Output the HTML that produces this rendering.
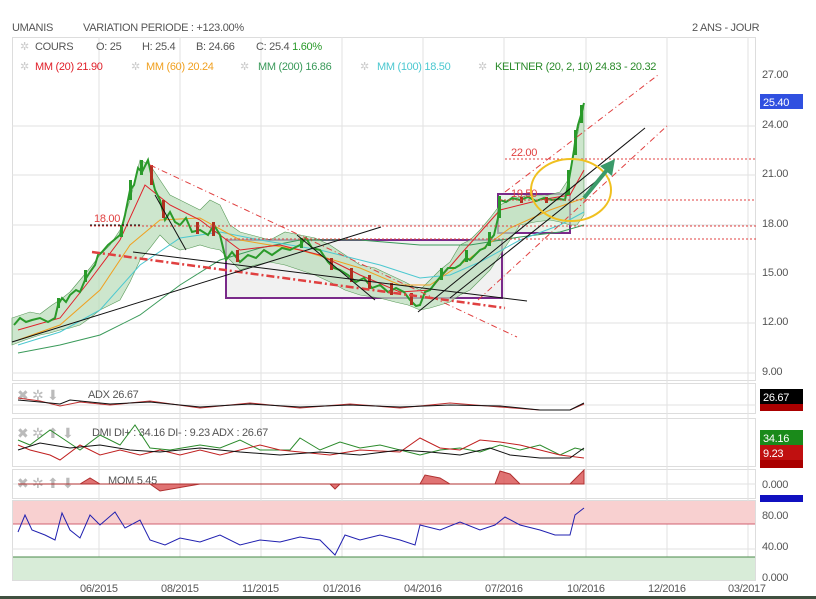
<!DOCTYPE html>
<html><head><meta charset="utf-8"><style>
body{margin:0;background:#fff;font-family:"Liberation Sans",sans-serif;}
svg{display:block}
text{font-family:"Liberation Sans",sans-serif;letter-spacing:-0.3px}
</style></head><body>
<svg width="816" height="599" viewBox="0 0 816 599" xmlns="http://www.w3.org/2000/svg">
<rect width="816" height="599" fill="#fff"/>
<text x="12" y="31" font-size="11" fill="#555">UMANIS</text>
<text x="83" y="31" font-size="11" fill="#555">VARIATION PERIODE : +123.00%</text>
<text x="692" y="31" font-size="11" fill="#555">2 ANS - JOUR</text>
<g fill="none" stroke="#ddd">
<rect x="12.5" y="37.5" width="743" height="343"/>
<rect x="12.5" y="383.5" width="743" height="30"/>
<rect x="12.5" y="418.5" width="743" height="48"/>
<rect x="12.5" y="469.5" width="743" height="29"/>
<rect x="12.5" y="500.5" width="743" height="80"/>
</g>
<g stroke="#e2e2e2">
<line x1="99" y1="37" x2="99" y2="580"/><line x1="180" y1="37" x2="180" y2="580"/>
<line x1="261" y1="37" x2="261" y2="580"/><line x1="342" y1="37" x2="342" y2="580"/>
<line x1="423" y1="37" x2="423" y2="580"/><line x1="504" y1="37" x2="504" y2="580"/>
<line x1="586" y1="37" x2="586" y2="580"/><line x1="667" y1="37" x2="667" y2="580"/>
<line x1="748" y1="37" x2="748" y2="580"/>
<line x1="12" y1="126" x2="756" y2="126"/><line x1="12" y1="175" x2="756" y2="175"/>
<line x1="12" y1="225" x2="756" y2="225"/><line x1="12" y1="274" x2="756" y2="274"/>
<line x1="12" y1="323" x2="756" y2="323"/><line x1="12" y1="373" x2="756" y2="373"/>
<line x1="12" y1="405" x2="756" y2="405"/><line x1="12" y1="484" x2="756" y2="484"/>
<line x1="12" y1="549" x2="756" y2="549"/>
</g>
<g font-size="11">
<text x="20" y="50" fill="#ccc">✲</text><text x="35" y="50" fill="#555">COURS</text>
<text x="96" y="50" fill="#555">O: 25</text><text x="142" y="50" fill="#555">H: 25.4</text>
<text x="196" y="50" fill="#555">B: 24.66</text><text x="256" y="50" fill="#555">C: 25.4 <tspan fill="#2a9a2a">1.60%</tspan></text>
<text x="20" y="70" fill="#ccc">✲</text><text x="35" y="70" fill="#e0202a">MM (20) 21.90</text>
<text x="131" y="70" fill="#ccc">✲</text><text x="146" y="70" fill="#f0a020">MM (60) 20.24</text>
<text x="240" y="70" fill="#ccc">✲</text><text x="258" y="70" fill="#3a9a5a">MM (200) 16.86</text>
<text x="360" y="70" fill="#ccc">✲</text><text x="377" y="70" fill="#4cc8d0">MM (100) 18.50</text>
<text x="478" y="70" fill="#ccc">✲</text><text x="495" y="70" fill="#2a8a2a">KELTNER (20, 2, 10) 24.83 - 20.32</text>
</g>
<g font-size="11" fill="#555">
<text x="762" y="78">27.00</text><text x="762" y="128">24.00</text><text x="762" y="177">21.00</text>
<text x="762" y="227">18.00</text><text x="762" y="276">15.00</text><text x="762" y="325">12.00</text>
<text x="762" y="375">9.00</text>
<text x="762" y="488">0.000</text><text x="762" y="519">80.00</text><text x="762" y="550">40.00</text><text x="762" y="581">0.000</text>
<text x="80" y="592">06/2015</text><text x="161" y="592">08/2015</text><text x="242" y="592">11/2015</text>
<text x="323" y="592">01/2016</text><text x="404" y="592">04/2016</text><text x="485" y="592">07/2016</text>
<text x="567" y="592">10/2016</text><text x="648" y="592">12/2016</text><text x="728" y="592">03/2017</text>
</g>
<rect x="760" y="94" width="43" height="15" fill="#3050e0"/><text x="763" y="106" font-size="11" fill="#fff">25.40</text>
<rect x="760" y="389" width="43" height="15" fill="#000"/><text x="763" y="401" font-size="11" fill="#fff">26.67</text>
<rect x="760" y="404" width="43" height="7" fill="#a00"/>
<rect x="760" y="430" width="43" height="15" fill="#1a8a1a"/><text x="763" y="442" font-size="11" fill="#fff">34.16</text>
<rect x="760" y="445" width="43" height="15" fill="#c01010"/><text x="763" y="457" font-size="11" fill="#fff">9.23</text>
<rect x="760" y="460" width="43" height="8" fill="#a00"/>
<rect x="760" y="495" width="43" height="7" fill="#1010c0"/>
<rect x="226" y="240" width="276" height="58" fill="#f1f1f1" stroke="#7a2a8a" stroke-width="2"/>
<rect x="498" y="194" width="72" height="39" fill="#e8f3e8" stroke="#7a2a8a" stroke-width="2"/>
<polygon fill="#b8dcb8" fill-opacity="0.7" stroke="#5a9a5a" stroke-width="0.6" points="12,318 30,312 40,314 52,305 60,300 70,292 80,280 90,268 100,255 110,245 120,230 130,200 140,160 150,165 160,180 170,195 180,200 190,205 200,210 210,200 220,205 230,225 240,232 255,236 270,240 285,232 300,235 315,238 330,245 345,255 360,265 375,268 390,275 405,282 420,290 430,280 440,270 450,262 460,245 470,240 480,230 490,218 500,205 515,198 530,195 545,196 560,192 568,180 575,150 580,120 584,103 584,215 577,225 570,225 560,222 550,220 535,222 520,225 510,240 500,255 490,270 480,280 470,290 460,295 450,302 440,305 430,308 420,310 408,305 395,302 380,298 360,295 345,290 330,282 315,275 300,270 285,265 270,262 255,265 240,270 230,260 220,250 210,248 200,245 190,248 180,250 170,245 160,235 150,248 140,260 130,282 120,300 110,305 100,310 90,318 80,325 70,328 60,330 50,333 40,335 25,340 12,345"/>
<polyline fill="none" stroke="#3a9a5a" points="18,353 60,345 100,335 140,315 180,285 220,260 260,248 300,240 360,240 420,245 470,245 520,237 560,232 584,225"/>
<polyline fill="none" stroke="#4cc8d0" points="18,345 60,332 100,310 140,265 180,238 220,232 260,240 320,250 380,265 420,278 450,275 480,262 520,240 560,225 584,212"/>
<polyline fill="none" stroke="#f0a020" points="18,340 60,325 100,290 130,245 160,220 200,218 240,240 300,250 360,268 400,285 430,285 470,258 510,228 550,210 584,198"/>
<polyline fill="none" stroke="#e0202a" points="18,330 60,318 90,280 120,240 145,185 170,205 200,220 240,250 280,245 320,255 360,275 400,292 430,290 460,255 500,210 540,200 570,195 584,170"/>
<polyline fill="none" stroke="#2a9a2a" stroke-width="2" points="14,325 20,318 26,322 32,320 40,318 48,322 55,318 58,305 62,298 66,302 70,295 76,290 80,292 85,280 90,272 95,265 98,255 102,252 108,245 114,240 120,235 125,215 130,190 134,185 138,168 142,172 148,160 152,178 155,190 160,200 165,220 170,212 175,222 180,225 186,218 192,232 200,230 208,235 214,225 220,235 226,260 232,252 240,262 248,255 256,258 264,250 272,255 282,248 290,250 300,245 306,238 312,248 320,250 328,262 334,268 340,270 348,275 356,282 364,278 372,288 380,285 388,292 396,288 404,292 410,300 416,306 420,305 425,292 430,290 436,282 442,275 448,268 455,268 460,265 466,258 470,260 475,255 480,250 485,248 490,240 494,235 498,218 500,200 506,202 512,198 520,200 528,197 536,201 544,198 552,200 560,199 565,200 568,185 571,168 574,150 576,135 578,125 581,115 584,103"/>
<g fill="#2a9a2a">
<rect x="57" y="298" width="3" height="10"/><rect x="84" y="270" width="3" height="12"/><rect x="120" y="225" width="3" height="12"/><rect x="129" y="180" width="3" height="20"/><rect x="140" y="160" width="3" height="15"/><rect x="300" y="238" width="3" height="10"/><rect x="440" y="268" width="3" height="12"/><rect x="465" y="250" width="3" height="12"/><rect x="488" y="232" width="3" height="14"/><rect x="498" y="196" width="3" height="22"/><rect x="567" y="170" width="3" height="25"/><rect x="574" y="130" width="3" height="25"/><rect x="580" y="105" width="3" height="18"/>
</g>
<g fill="#b03020">
<rect x="150" y="165" width="3" height="20"/><rect x="162" y="200" width="3" height="18"/><rect x="196" y="222" width="3" height="12"/><rect x="212" y="222" width="3" height="14"/><rect x="236" y="250" width="3" height="12"/><rect x="330" y="258" width="3" height="12"/><rect x="350" y="268" width="3" height="14"/><rect x="368" y="275" width="3" height="14"/><rect x="390" y="283" width="3" height="12"/><rect x="410" y="293" width="3" height="12"/><rect x="520" y="197" width="3" height="6"/><rect x="545" y="197" width="3" height="6"/>
</g>
<g stroke="#e04040" stroke-dasharray="2 2" stroke-width="1">
<line x1="505" y1="159" x2="756" y2="159"/><line x1="500" y1="200" x2="756" y2="200"/>
<line x1="90" y1="226" x2="756" y2="226"/><line x1="226" y1="239" x2="756" y2="239"/>
</g>
<line x1="90" y1="225" x2="140" y2="225" stroke="#000" stroke-dasharray="2 2"/>
<text x="94" y="222" font-size="11" fill="#e04040">18.00</text>
<text x="511" y="156" font-size="11" fill="#e04040">22.00</text>
<text x="511" y="197" font-size="11" fill="#e04040">19.50</text>
<g stroke="#e04040" stroke-dasharray="6 3 1 3" fill="none">
<line x1="505" y1="192" x2="658" y2="75"/><line x1="478" y1="300" x2="668" y2="125"/>
<line x1="150" y1="165" x2="517" y2="337"/>
</g>
<line x1="92" y1="252" x2="505" y2="308" stroke="#e04040" stroke-width="2.5" stroke-dasharray="8 3 2 3"/>
<g stroke="#111" fill="none">
<line x1="12" y1="342" x2="381" y2="227"/><line x1="133" y1="252" x2="527" y2="301"/>
<line x1="418" y1="312" x2="645" y2="128"/><line x1="450" y1="298" x2="604" y2="175"/>
<line x1="155" y1="195" x2="186" y2="250"/><line x1="297" y1="235" x2="375" y2="300"/>
</g>
<ellipse cx="571" cy="190" rx="40" ry="31" fill="none" stroke="#f0c020" stroke-width="2"/>
<line x1="584" y1="198" x2="607" y2="170" stroke="#3a9a6a" stroke-width="4"/>
<polygon points="615,159 600,166 612,176" fill="#3a9a6a"/>
<g font-size="11" fill="#555">
<text x="17" y="400" fill="#bbb" font-size="14">✖ ✲ ⬇</text><text x="88" y="398">ADX 26.67</text>
<text x="17" y="438" fill="#bbb" font-size="14">✖ ✲ ⬆ ⬇</text><text x="92" y="436">DMI DI+ : 34.16 DI- : 9.23 ADX : 26.67</text>
<text x="17" y="488" fill="#bbb" font-size="14">✖ ✲ ⬆ ⬇</text><text x="108" y="484">MOM 5.45</text>
<text x="17" y="519" fill="#bbb" font-size="14">✖ ✲ ⬆</text><text x="87" y="516">RSI 91.15</text>
</g>
<polyline fill="none" stroke="#c03030" points="18,398 40,401 60,406 80,402 110,405 150,401 200,408 250,403 300,408 350,404 400,408 450,403 500,407 540,410 570,410 584,404"/>
<polyline fill="none" stroke="#111" points="18,400 40,402 60,404 70,400 110,404 150,402 200,407 250,404 300,407 350,405 400,407 450,405 500,406 540,410 570,410 584,403"/>
<polyline fill="none" stroke="#2a8a2a" points="18,440 30,445 50,430 65,440 80,450 100,435 120,445 135,425 150,448 170,450 200,445 220,448 240,440 260,450 290,450 300,438 320,450 340,442 360,448 380,445 400,450 420,455 440,450 460,448 480,452 500,445 520,450 540,445 560,455 575,448 584,450"/>
<polyline fill="none" stroke="#c02020" points="18,445 30,450 50,455 60,460 80,445 100,455 120,450 140,455 160,450 180,455 200,450 220,455 260,445 280,450 300,452 330,455 360,450 400,452 420,438 440,448 460,450 480,440 500,442 520,445 540,450 560,455 584,458"/>
<polyline fill="none" stroke="#111" points="18,450 40,443 70,448 100,445 130,450 160,452 200,448 240,452 280,455 320,452 360,455 400,450 430,452 460,455 490,448 510,455 540,458 570,458 584,448"/>
<path d="M18,484 L80,484 L90,478 L100,484 L150,484 L160,491 L200,484 L330,484 L335,489 L340,484 L420,484 L425,475 L440,478 L450,484 L495,484 L500,471 L510,474 L520,484 L570,484 L584,470 L584,484 Z" fill="#d85050" fill-opacity="0.8" stroke="#b03030"/>
<rect x="13" y="501" width="742" height="23" fill="#f8d0d0"/>
<line x1="13" y1="524" x2="755" y2="524" stroke="#d06070"/>
<rect x="13" y="557" width="742" height="23" fill="#d8ecd8"/>
<line x1="13" y1="557" x2="755" y2="557" stroke="#4a8a4a"/>
<polyline fill="none" stroke="#2020b0" points="18,532 25,515 32,530 45,535 55,540 62,513 70,530 80,538 90,515 100,525 115,512 125,528 140,520 150,540 165,545 180,538 200,542 220,535 240,545 260,540 280,542 300,537 320,540 335,555 345,535 360,540 380,535 400,540 415,545 420,525 440,530 460,522 480,530 495,525 505,517 520,525 540,530 555,535 570,535 575,515 584,508"/>
<rect x="0" y="596" width="816" height="3" fill="#405040"/>
</svg>
</body></html>
